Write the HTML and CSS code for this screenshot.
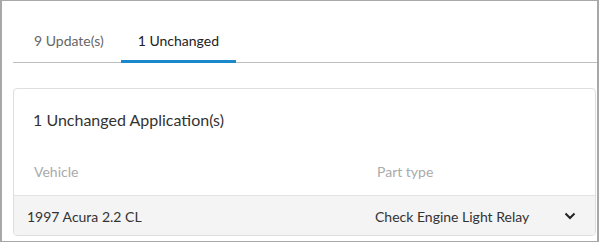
FILE: index.html
```html
<!DOCTYPE html>
<html lang="en">
<head>
    <meta charset="UTF-8">
    <meta name="viewport" content="width=device-width, initial-scale=1.0">
    <title>Application changes</title>
    <link rel="stylesheet" href="styles.css">
</head>
<body>
    <div class="frame">
        <div class="tabs">
            <div class="tab">9 Update(s)</div>
            <div class="tab active">1 Unchanged</div>
        </div>

        <div class="card">
            <h2 class="card-title">1 Unchanged Application(s)</h2>
            <div class="table-head">
                <span>Vehicle</span>
                <span>Part type</span>
            </div>
            <div class="table-row">
                <span>1997 Acura 2.2 CL</span>
                <span>Check Engine Light Relay</span>
                <svg class="chevron" width="12" height="8" viewBox="0 0 12 8">
                    <path d="M1.5 1.5 L6 6 L10.5 1.5" fill="none" stroke="#222" stroke-width="2"/>
                </svg>
            </div>
        </div>
    </div>
</body>
</html>
```

FILE: styles.css
```css
body {
    margin: 0;
    font-family: Lato, "Open Sans", sans-serif;
    color: #333;
}

.frame {
    width: 599px;
    height: 242px;
    box-sizing: border-box;
    border: 1px solid #a8a8a8;
    border-left-width: 2px;
    border-right-width: 2px;
    padding-left: 11px;
    overflow: hidden;
}

.tabs {
    display: flex;
    padding-left: 4px;
    border-bottom: 1px solid #bdbdbd;
}

.tab {
    padding: 30px 17px 9px;
    line-height: 20px;
    font-size: 14px;
    color: #666;
    border-bottom: 3px solid transparent;
    margin-bottom: -1px;
}

.tab.active {
    color: #222;
    border-bottom-color: #1b88cc;
}

.card {
    margin: 25px 1px 0 0;
    border: 1px solid #dedede;
    border-radius: 4px;
    height: 148px;
    box-sizing: border-box;
    overflow: hidden;
}

.card-title {
    margin: 0;
    padding: 19px 19px 0;
    font-size: 16px;
    font-weight: normal;
    line-height: 24px;
    color: #333;
}

.table-head {
    display: grid;
    grid-template-columns: 343px 1fr;
    margin-top: 30px;
    padding: 0 0 13px 20px;
    line-height: 20px;
    font-size: 14px;
    color: #aaa;
}

.table-row {
    display: grid;
    grid-template-columns: 348px 1fr 12px;
    align-items: center;
    height: 40px;
    padding: 0 19px 0 13px;
    border-top: 1px solid #e2e2e2;
    background: #f4f4f4;
    font-size: 14px;
    color: #333;
}

.chevron {
    display: block;
}
```
